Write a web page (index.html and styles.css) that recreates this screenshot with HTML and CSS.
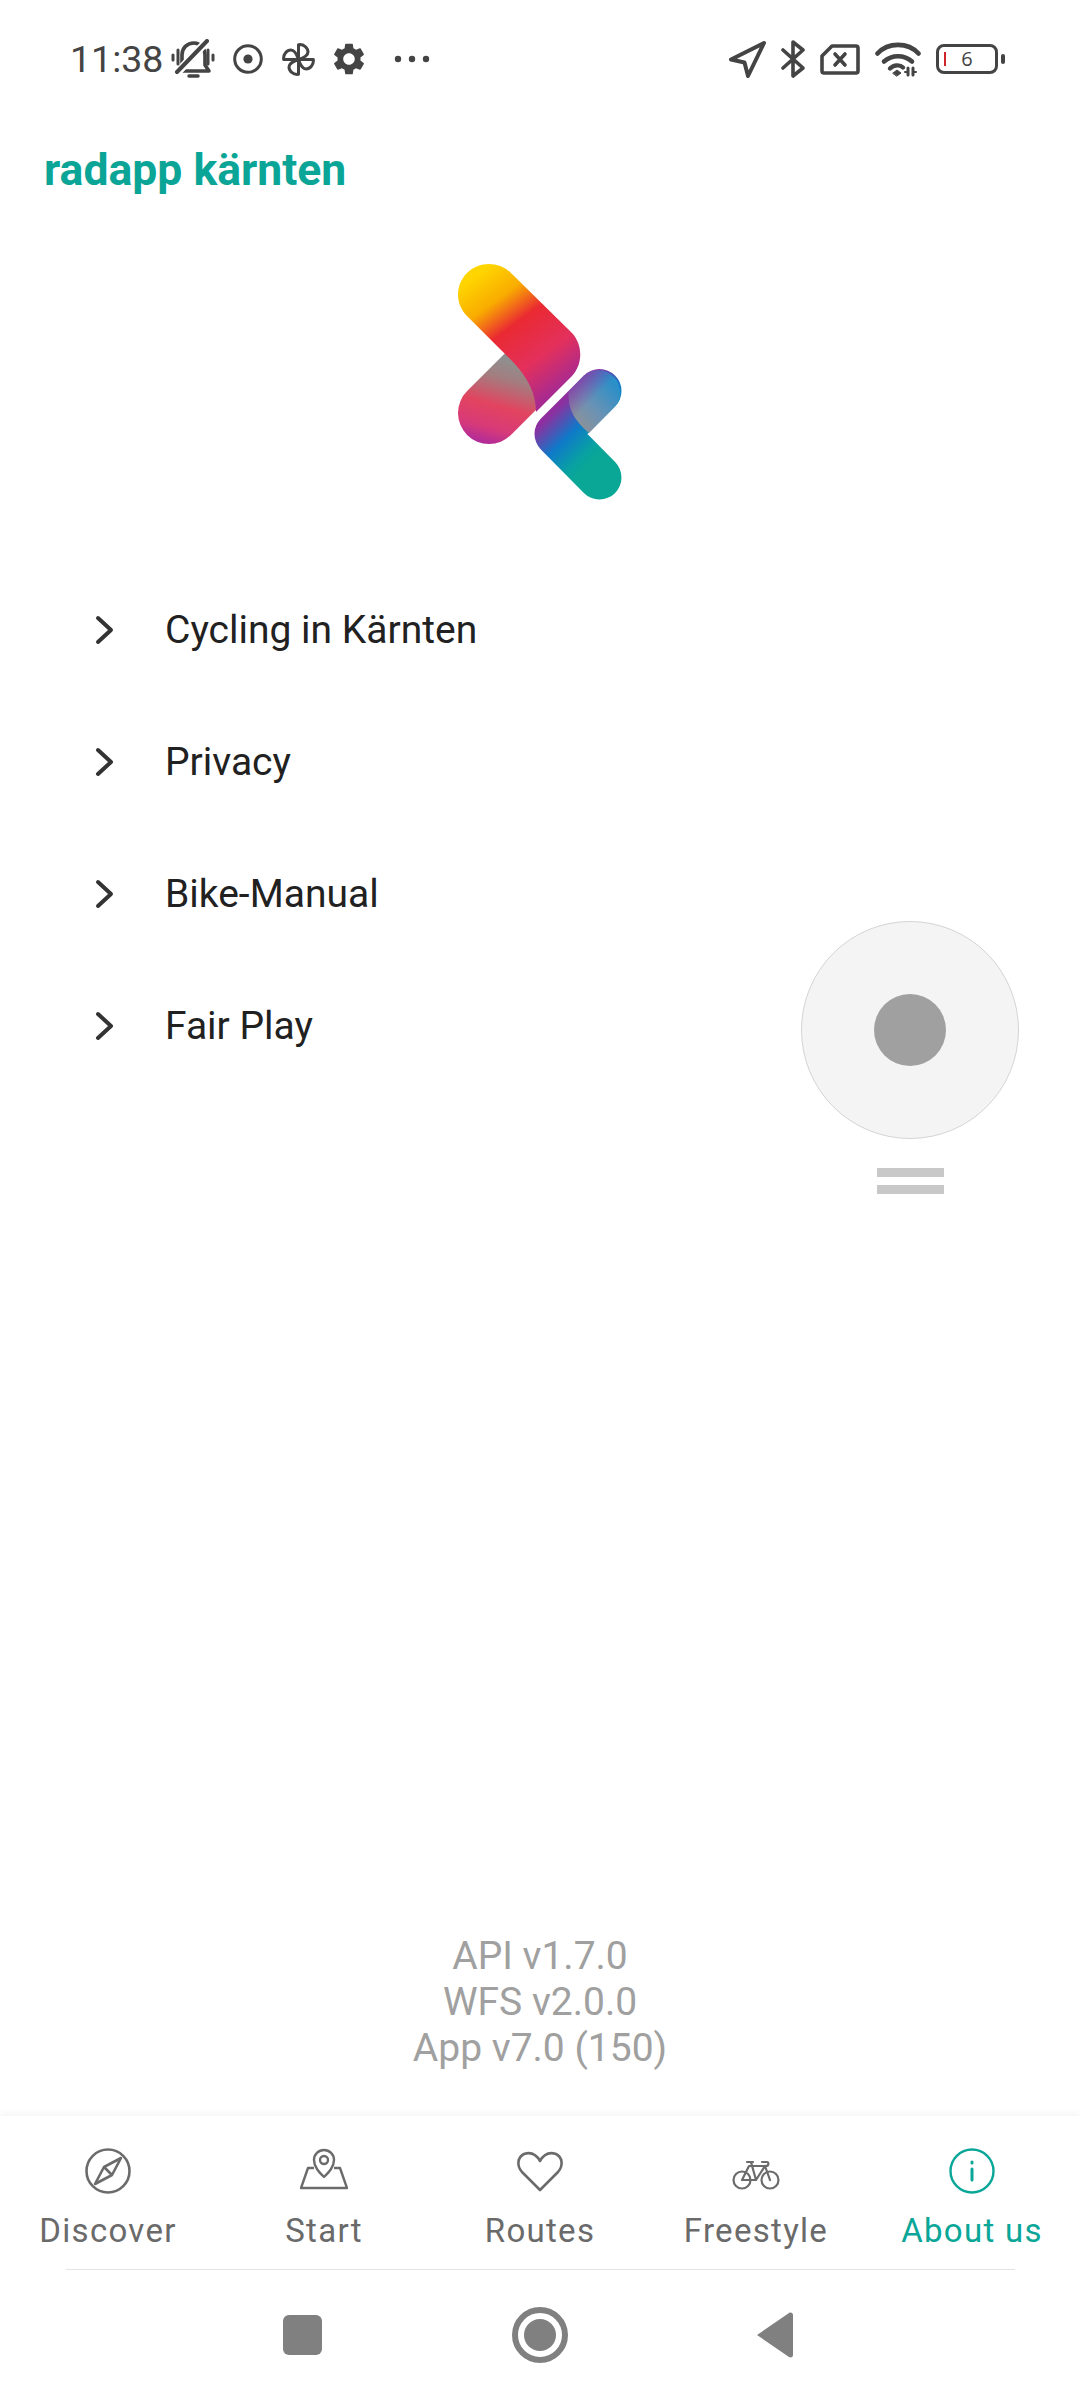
FILE: index.html
```html
<!DOCTYPE html>
<html lang="en">
<head>
  <meta charset="UTF-8" />
  <title>radapp kärnten</title>
  <link rel="stylesheet" href="styles.css">
</head>
<body>
  <div class="screen">
    <div class="status">
      <span class="time">11:38</span>
      <svg class="st-mute" width="44" height="40" viewBox="0 0 44 40" fill="none" stroke="#444" stroke-width="3.6" stroke-linecap="round" stroke-linejoin="round">
        <path d="M7 32h31l-4-6V16c0-7-5-12-11-12-7 0-12 5-12 12v10z"/>
        <path d="M4 36L37 1" stroke="#fff" stroke-width="8"/>
        <path d="M6 33L36 2" stroke-width="4"/>
        <path d="M2 16v5M7 11v14M37 11v14M42 16v5" stroke-width="3"/>
        <path d="M18 37h9" stroke-width="3.500"/>
      </svg>
      <svg class="st-circle" width="30" height="30" viewBox="0 0 30 30" fill="none">
        <circle cx="15" cy="15" r="13.300" stroke="#444" stroke-width="3"/>
        <circle cx="15" cy="15" r="4.600" fill="#444"/>
      </svg>
      <svg class="st-fan" width="33" height="33" viewBox="0 0 33 33" fill="none" stroke="#444" stroke-width="3" stroke-linejoin="round">
        <path d="M16.500 16.500V1.700C22 1 26 5 26 9c0 4-5 6-9.500 7.500z"/>
        <path d="M16.500 16.500V1.700C22 1 26 5 26 9c0 4-5 6-9.500 7.500z" transform="rotate(90 16.500 16.500)"/>
        <path d="M16.500 16.500V1.700C22 1 26 5 26 9c0 4-5 6-9.500 7.500z" transform="rotate(180 16.500 16.500)"/>
        <path d="M16.500 16.500V1.700C22 1 26 5 26 9c0 4-5 6-9.500 7.500z" transform="rotate(270 16.500 16.500)"/>
      </svg>
      <svg class="st-gear" width="32" height="32" viewBox="2 2 20 20" fill="#444">
        <path d="M19.14 12.94c.04-.3.06-.61.06-.94 0-.32-.02-.64-.07-.94l2.03-1.58c.18-.14.23-.41.12-.61l-1.92-3.32c-.12-.22-.37-.29-.59-.22l-2.39.96c-.5-.38-1.03-.7-1.62-.94l-.36-2.54c-.04-.24-.24-.41-.48-.41h-3.84c-.24 0-.43.17-.47.41l-.36 2.54c-.59.24-1.13.57-1.62.94l-2.39-.96c-.22-.08-.47 0-.59.22L2.74 8.87c-.12.21-.08.47.12.61l2.03 1.58c-.05.3-.09.63-.09.94s.02.64.07.94l-2.03 1.58c-.18.14-.23.41-.12.61l1.92 3.32c.12.22.37.29.59.22l2.39-.96c.5.38 1.03.7 1.62.94l.36 2.54c.05.24.24.41.48.41h3.84c.24 0 .44-.17.47-.41l.36-2.54c.59-.24 1.13-.56 1.62-.94l2.39.96c.22.08.47 0 .59-.22l1.92-3.32c.12-.22.07-.47-.12-.61l-2.01-1.58zM12 15.600c-1.980 0-3.600-1.620-3.600-3.600s1.620-3.600 3.600-3.600 3.600 1.620 3.600 3.600-1.620 3.600-3.600 3.600z"/>
      </svg>
      <svg class="st-dots" width="36" height="8" viewBox="0 0 36 8" fill="#444">
        <circle cx="4" cy="4" r="3.200"/><circle cx="18" cy="4" r="3.200"/><circle cx="32" cy="4" r="3.200"/>
      </svg>

      <div class="status-right">
        <svg width="37" height="37" viewBox="0 0 37 37" fill="none" stroke="#444" stroke-width="4" stroke-linejoin="round">
          <path d="M35 2L2 18.500l13.500 3L19 35z"/>
        </svg>
        <svg width="24" height="38" viewBox="0 0 24 38" fill="none" stroke="#444" stroke-width="3.600" stroke-linecap="round" stroke-linejoin="round">
          <path d="M2 10l20 18-10 8V2l10 8L2 28"/>
        </svg>
        <svg width="40" height="31" viewBox="0 0 40 31" fill="none" stroke="#444" stroke-width="3.600" stroke-linejoin="round">
          <path d="M12 2h24a2 2 0 0 1 2 2v23a2 2 0 0 1-2 2H4a2 2 0 0 1-2-2V12z"/>
          <path d="M15 10l10 11M25 10L15 21" stroke-linecap="round"/>
        </svg>
        <svg width="46" height="36" viewBox="0 0 46 36" fill="none" stroke="#444" stroke-linecap="round">
          <path d="M2.500 12.500C13 1 33 1 43.500 12.500" stroke-width="4.600"/>
          <path d="M9 20.500c8-7 20-7 28 0" stroke-width="4.600"/>
          <path d="M15 27.500c4-4 10-4 13-1" stroke-width="4.400"/>
          <path d="M18 32l4-3 4 3-4 3z" fill="#444" stroke-width="1"/>
          <path d="M33 27v7M38 27v7" stroke-width="3"/>
          <path d="M30 31h3M38 31h3" stroke-width="2"/>
        </svg>
        <div class="battery">
          <div class="battery-body">
            <span class="battery-level"></span>
            <span class="battery-num">6</span>
          </div>
          <span class="battery-nub"></span>
        </div>
      </div>
    </div>

    <h1 class="title">radapp kärnten</h1>

    <svg class="logo" width="240" height="280" viewBox="0 0 240 280">
      <defs>
        <linearGradient id="armLow" gradientUnits="userSpaceOnUse" x1="108" y1="125" x2="85" y2="208">
          <stop offset="0" stop-color="#8f8f8f"/>
          <stop offset="0.22" stop-color="#a27e80"/>
          <stop offset="0.55" stop-color="#e2445f"/>
          <stop offset="0.82" stop-color="#d83a78"/>
          <stop offset="1" stop-color="#b22c98"/>
        </linearGradient>
        <linearGradient id="armTop" gradientUnits="userSpaceOnUse" x1="50" y1="30" x2="138" y2="150">
          <stop offset="0.05" stop-color="#ffd500"/>
          <stop offset="0.27" stop-color="#f9ac00"/>
          <stop offset="0.47" stop-color="#ea2a32"/>
          <stop offset="0.75" stop-color="#e3305c"/>
          <stop offset="1" stop-color="#a82a90"/>
        </linearGradient>
        <linearGradient id="tealArm" gradientUnits="userSpaceOnUse" x1="125" y1="170" x2="175" y2="220">
          <stop offset="0.1" stop-color="#8e2f9f"/>
          <stop offset="0.49" stop-color="#0f79c9"/>
          <stop offset="0.85" stop-color="#08a3a0"/>
          <stop offset="1" stop-color="#0aa796"/>
        </linearGradient>
        <linearGradient id="blueArm" gradientUnits="userSpaceOnUse" x1="192" y1="142" x2="150" y2="180">
          <stop offset="0" stop-color="#2b8fc8"/>
          <stop offset="0.55" stop-color="#6b92b4"/>
          <stop offset="1" stop-color="#8f9296"/>
        </linearGradient>
        <linearGradient id="purpleEdge" gradientUnits="userSpaceOnUse" x1="150" y1="138" x2="172" y2="160">
          <stop offset="0" stop-color="#8c2fa6"/>
          <stop offset="1" stop-color="#8c2fa6" stop-opacity="0"/>
        </linearGradient>
      </defs>
      <path d="M69 173L128 114" fill="none" stroke="url(#armLow)" stroke-width="62" stroke-linecap="round"/>
      <path d="M47 76L81 110C100 128 116 146 116 172L152 136C163 124 163 105 152 93L91 33C79 21 59 21 47 33C35 45 35 64 47 76z" fill="url(#armTop)"/>
      <path d="M179.500 237.500L136.500 194L179.500 151" fill="none" stroke="url(#tealArm)" stroke-width="44" stroke-linecap="round" stroke-linejoin="round"/>
      <path d="M164 135.500A22 22 0 0 1 195 166.500L169 193C158 183 147 172 149 151z" fill="url(#blueArm)"/>
      <path d="M164 135.500A22 22 0 0 1 195 166.500L169 193C158 183 147 172 149 151z" fill="url(#purpleEdge)"/>
    </svg>

    <ul class="menu">
      <li class="menu-row">
        <svg width="20" height="30" viewBox="0 0 20 30" fill="none" stroke="#333" stroke-width="4" stroke-linecap="round" stroke-linejoin="round"><path d="M3 3l13 12L3 27"/></svg>
        <span>Cycling in Kärnten</span>
      </li>
      <li class="menu-row">
        <svg width="20" height="30" viewBox="0 0 20 30" fill="none" stroke="#333" stroke-width="4" stroke-linecap="round" stroke-linejoin="round"><path d="M3 3l13 12L3 27"/></svg>
        <span>Privacy</span>
      </li>
      <li class="menu-row">
        <svg width="20" height="30" viewBox="0 0 20 30" fill="none" stroke="#333" stroke-width="4" stroke-linecap="round" stroke-linejoin="round"><path d="M3 3l13 12L3 27"/></svg>
        <span>Bike-Manual</span>
      </li>
      <li class="menu-row">
        <svg width="20" height="30" viewBox="0 0 20 30" fill="none" stroke="#333" stroke-width="4" stroke-linecap="round" stroke-linejoin="round"><path d="M3 3l13 12L3 27"/></svg>
        <span>Fair Play</span>
      </li>
    </ul>

    <div class="spacer"></div>

    <div class="versions">
      <div>API v1.7.0</div>
      <div>WFS v2.0.0</div>
      <div>App v7.0 (150)</div>
    </div>

    <nav class="tabs">
      <div class="tab">
        <svg width="48" height="48" viewBox="0 0 48 48" fill="none" stroke="#6b6b6b" stroke-width="2.600" stroke-linejoin="round">
          <circle cx="24" cy="24" r="21.500"/>
          <path d="M37 11L28 28 11 37 20 20z"/>
          <path d="M20 20L28 28"/>
        </svg>
        <span>Discover</span>
      </div>
      <div class="tab">
        <svg width="48" height="48" viewBox="0 0 48 48" fill="none" stroke="#6b6b6b" stroke-width="2.400" stroke-linejoin="round">
          <path d="M24 30c-5-5-10-10-10-17a10 10 0 0 1 20 0c0 7-5 12-10 17z"/>
          <circle cx="24" cy="13" r="4"/>
          <path d="M14 21H8L1 41h46l-7-20h-6"/>
        </svg>
        <span>Start</span>
      </div>
      <div class="tab">
        <svg width="48" height="48" viewBox="0 0 48 48" fill="none" stroke="#6b6b6b" stroke-width="2.600" stroke-linejoin="round">
          <path d="M24 43L6 25C0 18 2 10 8 7c6-2 12 0 16 7 4-7 10-9 16-7 6 3 8 11 2 18z"/>
        </svg>
        <span>Routes</span>
      </div>
      <div class="tab">
        <svg width="48" height="48" viewBox="0 0 48 48" fill="none" stroke="#6b6b6b" stroke-width="2.200" stroke-linejoin="round" stroke-linecap="round">
          <circle cx="10" cy="33" r="8.500"/>
          <circle cx="38" cy="33" r="8.500"/>
          <path d="M10 33l7-14h16l5 14M33 19L24 33H10M15 15h6M19 15l5 18M30 15h5c2 0 2 4-1 4"/>
        </svg>
        <span>Freestyle</span>
      </div>
      <div class="tab tab-active">
        <svg width="48" height="48" viewBox="0 0 48 48" fill="none" stroke="#0aa698" stroke-width="2.400" stroke-linecap="round">
          <circle cx="24" cy="24" r="21.500"/>
          <path d="M24 22v11" stroke-width="3"/>
          <path d="M24 15v1" stroke-width="3"/>
        </svg>
        <span>About us</span>
      </div>
    </nav>

    <div class="sysnav">
      <span class="nav-square"></span>
      <span class="nav-circle"><span class="nav-dot"></span></span>
      <svg width="38" height="46" viewBox="0 0 38 46" fill="#808080"><path d="M1 23L33 1c2-1 4 0 4 2v40c0 2-2 3-4 2z"/></svg>
    </div>

    <div class="joystick"><span class="joystick-dot"></span></div>
    <div class="handle"><span></span><span></span></div>
  </div>
</body>
</html>
```

FILE: styles.css
```css
* { box-sizing: border-box; }
html, body { margin: 0; padding: 0; background: #fff; }
.screen { position: relative; display: flex; flex-direction: column; width: 1080px; height: 2400px; font-family: Roboto, sans-serif; background: #fff; overflow: hidden; }

.status { display: flex; align-items: center; height: 118px; padding: 0 75px 0 70px; color: #444; flex-shrink: 0; }
.time { font-size: 37.500px; line-height: 44px; width: 101px; }
.st-circle { margin-left: 18px; }
.st-fan { margin-left: 19px; }
.st-gear { margin-left: 18px; }
.st-dots { margin-left: 29px; }
.status-right { display: flex; align-items: center; gap: 15px; margin-left: auto; }
.battery { display: flex; align-items: center; gap: 3px; }
.battery-body { position: relative; display: flex; align-items: center; justify-content: center; width: 62px; height: 30px; border: 3px solid #444; border-radius: 8px; }
.battery-level { position: absolute; left: 5px; top: 5px; width: 2px; height: 14px; background: #d0242b; }
.battery-num { font-family: "Open Sans", sans-serif; font-size: 20px; line-height: 24px; color: #444; }
.battery-nub { width: 4px; height: 10px; border-radius: 2px; background: #444; }

.title { margin: 0; padding: 0 0 0 44px; font-size: 44.500px; line-height: 50px; font-weight: 700; color: #0aa597; height: 50px; margin-top: 27px; flex-shrink: 0; }

.logo { align-self: center; margin-top: 45px; flex-shrink: 0; }

.menu { list-style: none; margin: 0; padding: 0; margin-top: 44px; }
.menu-row { display: flex; align-items: center; height: 132px; padding-left: 95px; font-size: 39px; color: #212121; }
.menu-row span { margin-left: 50px; }

.spacer { flex: 1; }

.versions { text-align: center; font-size: 39px; line-height: 46px; color: #a0a0a0; padding-bottom: 45px; }

.tabs { display: flex; height: 154px; padding-top: 31px; background: #fff; box-shadow: 0 -4px 6px rgba(0, 0, 0, 0.03); position: relative; }
.tabs::after { content: ""; position: absolute; left: 66px; right: 65px; bottom: 0; height: 1px; background: #e4e4e4; }
.tab { flex: 1; display: flex; flex-direction: column; align-items: center; color: #6a6a6a; font-size: 33px; letter-spacing: 1.300px; }
.tab span { margin-top: 16px; line-height: 40px; }
.tab-active { color: #0aa698; }

.sysnav { display: flex; align-items: center; justify-content: center; height: 130px; padding-right: 4px; flex-shrink: 0; }
.nav-square { width: 39px; height: 40px; background: #808080; border-radius: 6px; margin-right: 190px; }
.nav-circle { display: flex; align-items: center; justify-content: center; width: 56px; height: 56px; border: 6px solid #808080; border-radius: 50%; margin-right: 188px; }
.nav-dot { width: 32px; height: 32px; background: #808080; border-radius: 50%; }

.joystick { position: absolute; left: 801px; top: 921px; display: flex; align-items: center; justify-content: center; width: 218px; height: 218px; background: #f4f4f4; border: 1px solid #d4d4d4; border-radius: 50%; }
.joystick-dot { width: 72px; height: 72px; background: #a0a0a0; border-radius: 50%; }
.handle { position: absolute; left: 877px; top: 1168px; display: flex; flex-direction: column; gap: 8px; width: 67px; }
.handle span { height: 9px; background: #c8c8c8; }
```
